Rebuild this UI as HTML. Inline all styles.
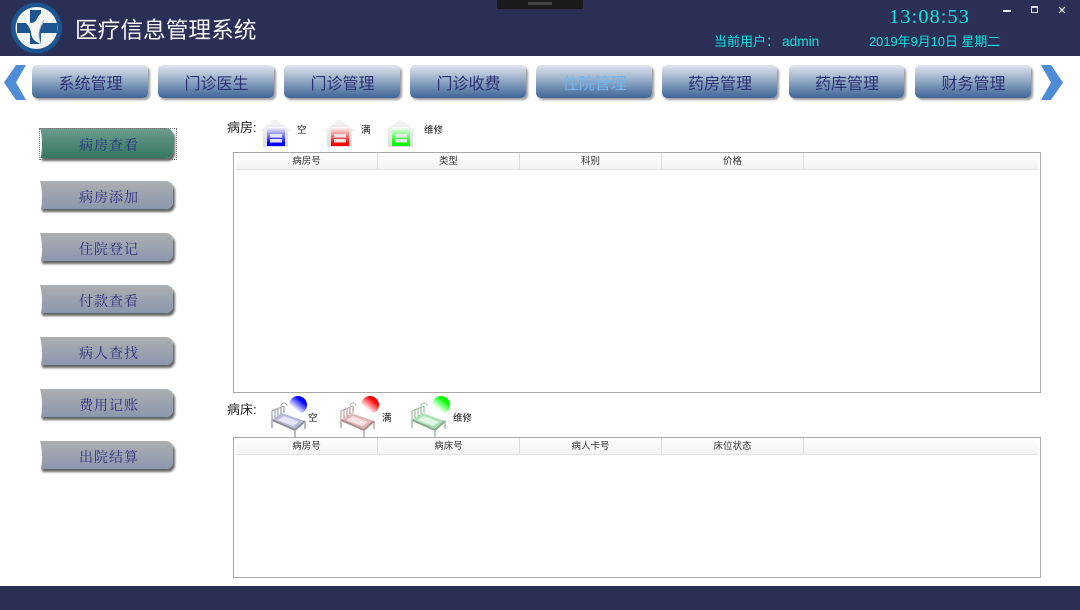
<!DOCTYPE html>
<html lang="zh-CN"><head><meta charset="utf-8"><title>医疗信息管理系统</title>
<style>
*{box-sizing:border-box}
html,body{margin:0;padding:0;width:1080px;height:610px;overflow:hidden;background:#fff;font-family:"Liberation Sans","Noto Sans CJK SC",sans-serif}
.a{position:absolute;white-space:nowrap}
.nav{position:absolute;top:65px;width:116px;height:33px;border-radius:5px;background:linear-gradient(#dfe5ee 0,#a9bad0 35%,#6c8bb0 70%,#3f6596 100%);box-shadow:2px 2px 2px #999;color:#2c2f74;font-size:16px;line-height:39px;text-align:center;padding-left:1px}
.side{position:absolute;left:40px;width:133px;height:28px;background:linear-gradient(#adafb0,#8c97ae);box-shadow:2px 3px 2px #666;border-radius:0 7px 7px 0;color:#2c2f80;font-size:14px;line-height:36px;text-align:center;letter-spacing:1px;font-family:"Liberation Serif","Noto Serif CJK SC",serif;overflow:visible;padding-left:5px}
.side:before{content:"";position:absolute;left:-5px;top:-1px;width:7px;height:34px;background:#fff;border-radius:0 50% 50% 0/0 50% 50% 0}
.tb{position:absolute;left:233px;width:808px;border:1px solid #a9a9a9;background:#fff}
.hd{position:absolute;left:2px;right:2px;top:0;height:17px;background:linear-gradient(#fff,#f3f3f3);border-bottom:1px solid #e3e3e3}
.hd span{position:absolute;top:0;width:142px;height:16px;border-right:1px solid #ddd;font-size:9.5px;line-height:17px;text-align:center;color:#333}
.lb{font-size:13px;color:#222}
.sm{font-size:9.5px;color:#111}
</style></head><body>
<div class="a" style="left:0;top:0;width:1080px;height:56px;background:#2c2f55"></div>
<div class="a" style="left:497px;top:0;width:86px;height:9px;background:#1a1a1a"></div>
<div class="a" style="left:528px;top:2px;width:24px;height:3px;background:#444"></div>
<svg class="a" style="left:10px;top:2px" width="54" height="52" viewBox="0 0 54 52">
<circle cx="26.500" cy="26" r="25.500" fill="#1c5590"/><circle cx="26.500" cy="26" r="21" fill="#f2f4f7"/>
<path d="M20 8h11v13h16v10H31v11H20V31H7V21h13z" fill="#1c5590"/>
<path d="M13 18C20 22 24 22 27 17 29 12 33 9 37 8 37 13 36 18 32 23 28 28 29 36 31 42 24 40 21 35 21 30 20 25 17 22 13 18Z" fill="#f4f4f2"/>
<path d="M34 18C31 24 27 30 30 39" stroke="#9fb0c4" stroke-width="1" fill="none"/>
</svg>
<div class="a" style="left:75px;top:15px;font-size:22.700px;line-height:30px;color:#f4f4f4">医疗信息管理系统</div>
<div class="a" style="left:889px;top:4px;font-family:'Liberation Serif',serif;font-size:20.500px;line-height:26px;color:#0ce4e0;letter-spacing:1px">13:08:53</div>
<div class="a" style="left:714px;top:33px;font-size:13px;line-height:18px;color:#0ce4e0">当前用户：</div>
<div class="a" style="left:782px;top:33px;font-size:13.700px;line-height:18px;color:#0ce4e0">admin</div>
<div class="a" style="left:869px;top:33px;font-size:12.900px;line-height:18px;color:#0ce4e0">2019年9月10日 星期二</div>
<div class="a" style="left:1003px;top:10px;width:8px;height:2px;background:#eee"></div>
<div class="a" style="left:1031px;top:6px;width:7px;height:7px;border:1px solid #ddd;border-top-width:2px"></div>
<svg class="a" style="left:1058px;top:6px" width="8" height="8" viewBox="0 0 8 8"><path d="M1 1l6 6M7 1L1 7" stroke="#eee" stroke-width="1.200"/></svg>
<svg class="a" style="left:3px;top:64px" width="24" height="37" viewBox="0 0 24 37"><path d="M23 1H13L1 18.500 13 36H23L13 18.500Z" fill="#4f8cd8"/></svg>
<svg class="a" style="left:1040px;top:64px" width="24" height="37" viewBox="0 0 24 37"><path d="M1 1H11L23 18.500 11 36H1L11 18.500Z" fill="#4f8cd8"/></svg>
<div class="nav" style="left:32px">系统管理</div>
<div class="nav" style="left:158px">门诊医生</div>
<div class="nav" style="left:284px">门诊管理</div>
<div class="nav" style="left:410px">门诊收费</div>
<div class="nav" style="left:536px;color:#6fb6ee">住院管理</div>
<div class="nav" style="left:662px;width:115px">药房管理</div>
<div class="nav" style="left:789px;width:115px">药库管理</div>
<div class="nav" style="left:915px;width:116px">财务管理</div>

<div class="side" style="top:128px;height:30px;line-height:38px;background:linear-gradient(#6d9c90,#35785f)">病房查看</div>
<div class="a" style="left:39px;top:128px;width:138px;height:32px;border:1px dotted #777"></div>
<div class="side" style="top:181px">病房添加</div>
<div class="side" style="top:233px">住院登记</div>
<div class="side" style="top:285px">付款查看</div>
<div class="side" style="top:337px">病人查找</div>
<div class="side" style="top:389px">费用记账</div>
<div class="side" style="top:441px">出院结算</div>

<div class="a lb" style="left:227px;top:120px;line-height:16px">病房:</div>
<svg class="a" style="left:260px;top:118px" width="32" height="30" viewBox="0 0 32 30"><defs><linearGradient id="b" x1="0" y1="0" x2="0" y2="1"><stop offset="0" stop-color="#fff"/><stop offset=".85" stop-color="#00f"/></linearGradient><linearGradient id="r" x1="0" y1="0" x2="0" y2="1"><stop offset="0" stop-color="#fff"/><stop offset=".85" stop-color="#f00"/></linearGradient><linearGradient id="g" x1="0" y1="0" x2="0" y2="1"><stop offset="0" stop-color="#fff"/><stop offset=".85" stop-color="#0f0"/></linearGradient><linearGradient id="h" x1="0" y1="0" x2="0" y2="1"><stop offset="0" stop-color="#f6f6f6"/><stop offset="1" stop-color="#dcdcdc"/></linearGradient></defs><path d="M15.500 1 31 13H28V29H3V13H0Z" fill="url(#h)"/><rect x="7" y="9" width="18" height="19" fill="url(#b)"/><rect x="10" y="16" width="12" height="3.500" fill="#e6e6e6"/><rect x="10" y="21" width="12" height="3.500" fill="#e6e6e6"/></svg>
<div class="a sm" style="left:297px;top:124px;line-height:14px">空</div>
<svg class="a" style="left:324px;top:118px" width="32" height="30" viewBox="0 0 32 30"><path d="M15.500 1 31 13H28V29H3V13H0Z" fill="url(#h)"/><rect x="7" y="9" width="18" height="19" fill="url(#r)"/><rect x="10" y="16" width="12" height="3.500" fill="#e6e6e6"/><rect x="10" y="21" width="12" height="3.500" fill="#e6e6e6"/></svg>
<div class="a sm" style="left:361px;top:124px;line-height:14px">满</div>
<svg class="a" style="left:385px;top:118px" width="32" height="30" viewBox="0 0 32 30"><path d="M15.500 1 31 13H28V29H3V13H0Z" fill="url(#h)"/><rect x="7" y="9" width="18" height="19" fill="url(#g)"/><rect x="10" y="16" width="12" height="3.500" fill="#e6e6e6"/><rect x="10" y="21" width="12" height="3.500" fill="#e6e6e6"/></svg>
<div class="a sm" style="left:424px;top:124px;line-height:14px">维修</div>

<div class="tb" style="top:152px;height:241px"><div class="hd"><span style="left:0">病房号</span><span style="left:142px">类型</span><span style="left:284px">科别</span><span style="left:426px">价格</span></div></div>

<div class="a lb" style="left:227px;top:402px;line-height:16px">病床:</div>
<svg width="0" height="0" style="position:absolute"><defs>
<linearGradient id="bb" x1=".85" y1=".1" x2=".2" y2=".9"><stop offset=".2" stop-color="#00f"/><stop offset=".8" stop-color="#fff"/></linearGradient>
<linearGradient id="rb" x1=".85" y1=".1" x2=".2" y2=".9"><stop offset=".2" stop-color="#f00"/><stop offset=".8" stop-color="#fff"/></linearGradient>
<linearGradient id="gb" x1=".85" y1=".1" x2=".2" y2=".9"><stop offset=".2" stop-color="#0f0"/><stop offset=".8" stop-color="#fff"/></linearGradient>
</defs></svg>
<svg class="a" style="left:265px;top:396px" width="50" height="42" viewBox="0 0 50 42"><path d="M7 24 17 17 40 25 30 33Z" fill="#b9b9de"/><path d="M12 24 19 20 34 26 28 30Z" fill="#e6e6f4"/><path d="M7 24 30 34 40 25" stroke="#8f8f96" stroke-width="2" fill="none"/><path d="M7 24V32M30 34V41M40 25V33" stroke="#a5a5ac" stroke-width="1.500" fill="none"/><path d="M7 15 19 10M7 15V24M10 14V22M13 13V20M16 11.500V18M19 10V17" stroke="#a0a0a8" stroke-width="1.200" fill="none"/><path d="M16 10C16 6 22 6 22 10" stroke="#a0a0a8" fill="none"/><circle cx="33" cy="9" r="9" fill="url(#bb)"/></svg>
<div class="a sm" style="left:308px;top:412px;line-height:14px">空</div>
<svg class="a" style="left:334px;top:396px" width="50" height="42" viewBox="0 0 50 42"><path d="M7 24 17 17 40 25 30 33Z" fill="#e3b4b4"/><path d="M12 24 19 20 34 26 28 30Z" fill="#f6e2e2"/><path d="M7 24 30 34 40 25" stroke="#a88c8c" stroke-width="2" fill="none"/><path d="M7 24V32M30 34V41M40 25V33" stroke="#c0a8a8" stroke-width="1.500" fill="none"/><path d="M7 15 19 10M7 15V24M10 14V22M13 13V20M16 11.500V18M19 10V17" stroke="#bda0a0" stroke-width="1.200" fill="none"/><path d="M16 10C16 6 22 6 22 10" stroke="#bda0a0" fill="none"/><circle cx="36" cy="9" r="9" fill="url(#rb)"/></svg>
<div class="a sm" style="left:382px;top:412px;line-height:14px">满</div>
<svg class="a" style="left:405px;top:396px" width="50" height="42" viewBox="0 0 50 42"><path d="M7 24 17 17 40 25 30 33Z" fill="#a9e0b4"/><path d="M12 24 19 20 34 26 28 30Z" fill="#e0f6e4"/><path d="M7 24 30 34 40 25" stroke="#86a88c" stroke-width="2" fill="none"/><path d="M7 24V32M30 34V41M40 25V33" stroke="#a2c0a8" stroke-width="1.500" fill="none"/><path d="M7 15 19 10M7 15V24M10 14V22M13 13V20M16 11.500V18M19 10V17" stroke="#9cc0a2" stroke-width="1.200" fill="none"/><path d="M16 10C16 6 22 6 22 10" stroke="#9cc0a2" fill="none"/><circle cx="36" cy="9" r="9" fill="url(#gb)"/></svg>
<div class="a sm" style="left:453px;top:412px;line-height:14px">维修</div>

<div class="tb" style="top:437px;height:141px"><div class="hd"><span style="left:0">病房号</span><span style="left:142px">病床号</span><span style="left:284px">病人卡号</span><span style="left:426px">床位状态</span></div></div>

<div class="a" style="left:0;top:586px;width:1080px;height:24px;background:#2c2f55"></div>
</body></html>
